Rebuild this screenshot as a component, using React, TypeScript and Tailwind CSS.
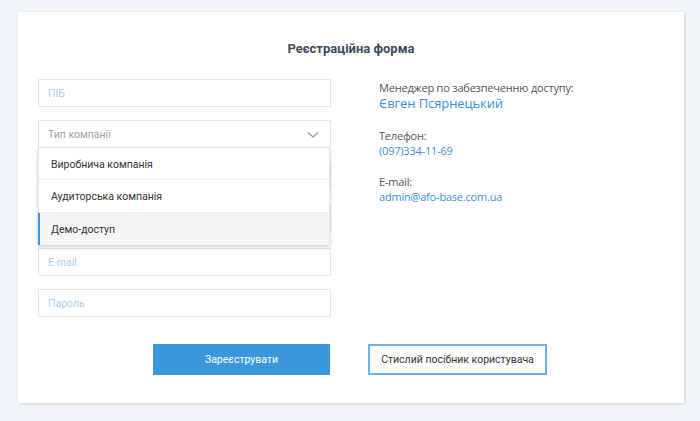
import React from "react";

const inputCls =
  "h-[28px] w-full border border-[#e3e6ea] bg-white flex items-center px-[9px] pt-px text-[10.5px] text-[#a9cdf0]";

export default function App() {
  return (
    <div
      className="w-[700px] h-[421px] bg-[#f2f5f7] pt-[12px] pl-[18px]"
      style={{ fontFamily: '"Open Sans", "Noto Sans", sans-serif' }}
    >
      <div className="w-[666px] h-[391px] bg-white shadow-[1px_1px_3px_rgba(0,0,0,0.15)] flex flex-col">
        <div
          className="pt-[28px] text-center text-[13px] leading-[18px] font-bold text-[#3d4a5c]"
          style={{ fontFamily: "Roboto, sans-serif" }}
        >
          Реєстраційна форма
        </div>
        <div className="flex mt-[21px]">
          <div
            className="ml-[20px] w-[293px] flex flex-col relative"
            style={{ fontFamily: "Roboto, sans-serif" }}
          >
            <div className={inputCls}>ПІБ</div>
            <div className="mt-[13px] h-[28px] w-full border border-[#e3e6ea] bg-white flex items-center justify-between px-[9px] pt-px text-[10.5px] text-[#a0a0a0]">
              <span>Тип компанії</span>
              <svg width="12" height="8" viewBox="0 0 12 8" className="mr-[2px]">
                <path d="M1 1.5 L6 6 L11 1.5" fill="none" stroke="#8a8f96" strokeWidth="1.1" />
              </svg>
            </div>
            <div className={"mt-[14px] " + inputCls}></div>
            <div className={"mt-[15px] " + inputCls}></div>
            <div className={"mt-[15px] " + inputCls}>E-mail</div>
            <div className={"mt-[13px] " + inputCls}>Пароль</div>

            <div className="absolute left-0 top-[69px] w-[292px] bg-white shadow-[0_2px_4px_rgba(0,0,0,0.18)] border-x border-[#e3e6ea] text-[10.5px] text-[#333]">
              <div className="h-[32px] flex items-center pl-[12px] pt-[2px] border-b border-[#efefef]">
                Виробнича компанія
              </div>
              <div className="h-[33px] flex items-center pl-[12px] pt-[2px] border-b border-[#efefef]">
                Аудиторська компанія
              </div>
              <div className="h-[32px] flex items-center pl-[11px] pt-[2px] bg-[#f5f5f5] border-l-2 border-[#3898db] -ml-px">
                Демо-доступ
              </div>
            </div>
          </div>
          <div className="ml-[48px] flex flex-col text-[#555] tracking-[-0.2px]">
            <div className="text-[11px] leading-[15px] mt-[1px]">Менеджер по забезпеченню доступу:</div>
            <div className="text-[13px] leading-[16px] text-[#3b8fdc] tracking-[-0.1px]">Євген Псярнецький</div>
            <div className="text-[11px] leading-[15px] mt-[17px]">Телефон:</div>
            <div className="text-[11px] leading-[15px] text-[#3b8fdc]">(097)334-11-69</div>
            <div className="text-[11px] leading-[15px] mt-[16px]">E-mail:</div>
            <div className="text-[11px] leading-[15px] text-[#3b8fdc]">admin@afo-base.com.ua</div>
          </div>
        </div>
        <div className="flex mt-[27px]" style={{ fontFamily: "Roboto, sans-serif" }}>
          <div className="ml-[135px] w-[177px] h-[31px] bg-[#3898db] text-white text-[10.5px] flex items-center justify-center">
            Зареєструвати
          </div>
          <div className="ml-[38px] w-[179px] h-[31px] border-2 border-[#6cb2e6] text-[#333] text-[10.5px] flex items-center justify-center">
            Стислий посібник користувача
          </div>
        </div>
      </div>
    </div>
  );
}
